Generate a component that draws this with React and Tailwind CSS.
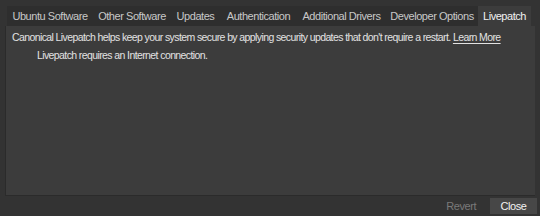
import React from "react";

const tabs = [
  { label: "Ubuntu Software", w: "w-[86px]" },
  { label: "Other Software", w: "w-[78px]" },
  { label: "Updates", w: "w-[49px]" },
  { label: "Authentication", w: "w-[77px]" },
  { label: "Additional Drivers", w: "w-[89px]" },
  { label: "Developer Options", w: "w-[92px]" },
  { label: "Livepatch", w: "w-[53px]" },
];

export default function App() {
  const active = "Livepatch";
  return (
    <div
      className="w-[540px] h-[216px] bg-[#333333] flex flex-col overflow-hidden text-[11px] tracking-[-0.45px] whitespace-nowrap"
      style={{ fontFamily: '"Liberation Sans", Arial, sans-serif' }}
    >
      <div className="pl-[5px] pr-[5px] pt-[6px] flex-1 flex flex-col">
        {/* tab strip */}
        <div className="flex h-[20px] pl-[2px]">
          {tabs.map((t) => (
            <div
              key={t.label}
              className={`${t.w} flex items-center justify-center leading-none ${
                t.label === active ? "bg-[#3c3c3c] text-[#f2f2f2]" : "bg-[#2e2e2e] text-[#c8c8c8]"
              }`}
            >
              {t.label}
            </div>
          ))}
        </div>
        {/* page */}
        <div className="flex-1 bg-[#3c3c3c] border-l border-b border-[#2b2b2b] pl-[6px] pt-[3px] text-[10.5px] tracking-[-0.6px]">
          <p className="text-[#e2e2e2] leading-[16px]">
            Canonical Livepatch helps keep your system secure by applying security updates that don't require a restart.{" "}
            <span className="underline underline-offset-2">Learn More</span>
          </p>
          <p className="text-[#e2e2e2] leading-[16px] mt-[2px] pl-[25px]">
            Livepatch requires an Internet connection.
          </p>
        </div>
      </div>
      {/* actions */}
      <div className="h-[20px] flex items-center justify-end gap-[14px] pr-[3px]">
        <span className="text-[#7a7a7a]">Revert</span>
        <button className="h-[16px] w-[47px] bg-[#474747] text-[#f2f2f2] flex items-center justify-center leading-none">
          Close
        </button>
      </div>
    </div>
  );
}
